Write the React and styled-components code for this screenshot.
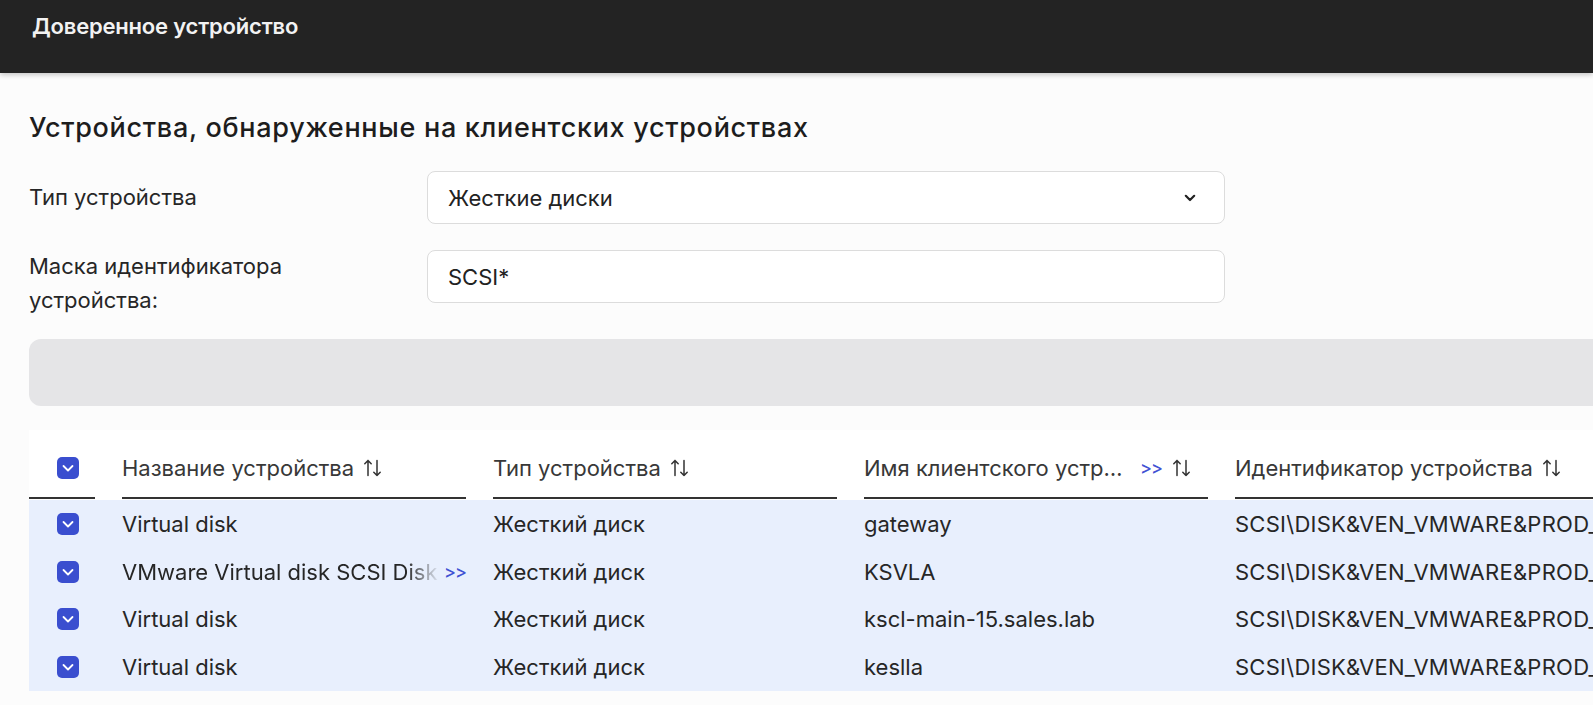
import React from 'react';
import styled, { createGlobalStyle } from 'styled-components';

const Global = createGlobalStyle`
  html, body { margin: 0; padding: 0; background: #fcfcfc; overflow: hidden; }
  body { font-family: Inter, "Noto Sans", sans-serif; color: #242424; }
`;

const Page = styled.div`
  width: 100vw;
  height: 100vh;
  overflow: hidden;
  background: #fcfcfc;
`;

const TopBar = styled.header`
  position: relative;
  z-index: 1;
  height: 73px;
  box-sizing: border-box;
  padding: 12px 32px 0;
  background: #232323;
  color: #f2f2f2;
  font-size: 22px;
  font-weight: 600;
  line-height: 28px;
  letter-spacing: -0.2px;
  box-shadow: 0 2px 5px rgba(0, 0, 0, 0.22);
`;

const Main = styled.main`
  width: 1900px;
  padding: 39px 0 0 29px;
`;

const Heading = styled.h1`
  margin: 0;
  font-size: 27px;
  font-weight: 500;
  line-height: 32px;
  letter-spacing: 0.7px;
  color: #1d1d1d;
`;

const Form = styled.div`
  display: grid;
  grid-template-columns: 398px 798px;
  row-gap: 26px;
  margin-top: 27px;
`;

const Label = styled.label`
  min-height: 53px;
  display: flex;
  align-items: center;
  font-size: 22px;
  line-height: 33.5px;
  color: #262626;
`;

const Field = styled.div`
  height: 53px;
  box-sizing: border-box;
  display: flex;
  align-items: center;
  justify-content: space-between;
  padding: 0 28px 0 20px;
  background: #fff;
  border: 1px solid #dcdcdc;
  border-radius: 8px;
  font-size: 22px;
  color: #222;
`;

const Toolbar = styled.div`
  height: 67px;
  margin-top: 22px;
  background: #e5e5e7;
  border-radius: 12px;
`;

const Table = styled.div`
  margin-top: 24px;
  background: #fff;
`;

const Columns = `
  display: grid;
  grid-template-columns: 66px 344px 344px 344px 560px;
  column-gap: 27px;
`;

const HeadRow = styled.div`
  ${Columns}
`;

const HeadCell = styled.div`
  display: flex;
  align-items: center;
  min-width: 0;
  padding: 22px ${(p) => (p.$pr ? p.$pr : 0)}px 13px ${(p) => (p.$pl ? p.$pl : 0)}px;
  border-bottom: 2px solid #333;
  font-size: 22px;
  line-height: 32px;
  color: #383838;
  white-space: nowrap;
`;

const HeadText = styled.span`
  min-width: 0;
  overflow: hidden;
  text-overflow: ellipsis;
`;

const Body = styled.div`
  margin-top: 1px;
  background: #e8effd;
`;

const Row = styled.div`
  ${Columns}
  height: 47.75px;
  align-items: center;
`;

const Cell = styled.div`
  display: flex;
  align-items: center;
  min-width: 0;
  padding-left: ${(p) => (p.$pl ? p.$pl : 0)}px;
  font-size: 22px;
  line-height: 30px;
  letter-spacing: ${(p) => (p.$ls ? p.$ls : 0)}px;
  color: #262626;
  white-space: nowrap;
`;

const FadeText = styled.span`
  flex: 1;
  min-width: 0;
  overflow: hidden;
  -webkit-mask-image: linear-gradient(to right, #000 calc(100% - 34px), transparent);
  mask-image: linear-gradient(to right, #000 calc(100% - 34px), transparent);
`;

const More = styled.span`
  flex: none;
  margin-left: ${(p) => (p.$ml ? p.$ml : 4)}px;
  color: #3f52d3;
  font-size: 18px;
  font-weight: 500;
  letter-spacing: -1px;
`;

const Check = styled.span`
  width: 22px;
  height: 22px;
  border-radius: 5px;
  background: #3a4ecf;
  display: inline-flex;
  align-items: center;
  justify-content: center;
  flex: none;
`;

const SortWrap = styled.span`
  display: inline-flex;
  flex: none;
  margin-left: ${(p) => (p.$ml ? p.$ml : 9)}px;
`;

const SortIcon = ({ ml }) => (
  <SortWrap $ml={ml}>
    <svg width="20" height="18" viewBox="0 0 20 18" fill="none" stroke="#333" strokeWidth="1.5" strokeLinecap="round" strokeLinejoin="round">
      <path d="M5 16.5V1.5M1.8 4.8L5 1.5 8.2 4.8" />
      <path d="M14 1.5v15M10.8 13.2L14 16.5 17.2 13.2" />
    </svg>
  </SortWrap>
);

const CheckBox = () => (
  <Check>
    <svg width="14" height="10" viewBox="0 0 14 10" fill="none" stroke="#fff" strokeWidth="1.8" strokeLinecap="round" strokeLinejoin="round">
      <path d="M2.5 3l4.5 4.5 4.5-4.5" />
    </svg>
  </Check>
);

const Chevron = () => (
  <svg width="12" height="8" viewBox="0 0 12 8" fill="none" stroke="#222" strokeWidth="2.2" strokeLinecap="round" strokeLinejoin="round">
    <path d="M1.8 1.8L6 6l4.2-4.2" />
  </svg>
);

const ID = 'SCSI\\DISK&VEN_VMWARE&PROD_VIRTUAL_DISK&REV_2.0\\5&1982005&0&000000';

const rows = [
  { name: 'Virtual disk', host: 'gateway' },
  { name: 'VMware Virtual disk SCSI Disk Device', host: 'KSVLA', long: true },
  { name: 'Virtual disk', host: 'kscl-main-15.sales.lab' },
  { name: 'Virtual disk', host: 'keslla' },
];

export default function App() {
  return (
    <Page>
      <Global />
      <TopBar>Доверенное устройство</TopBar>
      <Main>
        <Heading>Устройства, обнаруженные на клиентских устройствах</Heading>
        <Form>
          <Label>Тип устройства</Label>
          <Field>
            <span>Жесткие диски</span>
            <Chevron />
          </Field>
          <Label>
            Маска идентификатора
            <br />
            устройства:
          </Label>
          <Field>
            <span>SCSI*</span>
          </Field>
        </Form>
        <Toolbar />
        <Table>
          <HeadRow>
            <HeadCell $pl={28}>
              <CheckBox />
            </HeadCell>
            <HeadCell>
              <HeadText>Название устройства</HeadText>
              <SortIcon />
            </HeadCell>
            <HeadCell>
              <HeadText>Тип устройства</HeadText>
              <SortIcon />
            </HeadCell>
            <HeadCell $pr={16}>
              <HeadText>Имя клиентского устройства</HeadText>
              <More $ml={10}>&gt;&gt;</More>
              <SortIcon ml={10} />
            </HeadCell>
            <HeadCell>
              <HeadText>Идентификатор устройства</HeadText>
              <SortIcon />
            </HeadCell>
          </HeadRow>
          <Body>
            {rows.map((r, i) => (
              <Row key={i}>
                <Cell $pl={28}>
                  <CheckBox />
                </Cell>
                <Cell>
                  {r.long ? (
                    <>
                      <FadeText>{r.name}</FadeText>
                      <More>&gt;&gt;</More>
                    </>
                  ) : (
                    r.name
                  )}
                </Cell>
                <Cell>Жесткий диск</Cell>
                <Cell>{r.host}</Cell>
                <Cell $ls={0.25}>{ID}</Cell>
              </Row>
            ))}
          </Body>
        </Table>
      </Main>
    </Page>
  );
}
